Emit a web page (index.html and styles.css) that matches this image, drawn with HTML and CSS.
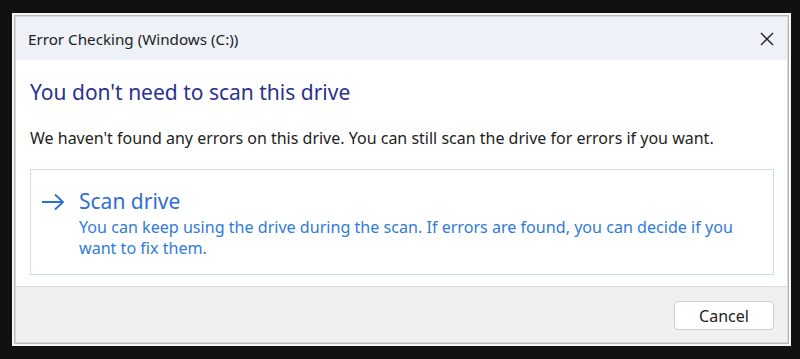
FILE: index.html
```html
<!DOCTYPE html>
<html>
<head>
    <meta charset="utf-8">
    <title>Error Checking (Windows (C:))</title>
    <link rel="stylesheet" href="styles.css">
</head>
<body>
<div class="frame">
    <div class="window">
        <div class="titlebar">
            <span class="title">Error Checking (Windows (C:))</span>
            <svg class="close" width="16" height="16" viewBox="0 0 16 16">
                <path d="M2 2 L14 14 M14 2 L2 14" stroke="#222" stroke-width="1.4" fill="none"/>
            </svg>
        </div>
        <div class="content">
            <h1>You don't need to scan this drive</h1>
            <p class="info">We haven't found any errors on this drive. You can still scan the drive for errors if you want.</p>
            <div class="option">
                <svg class="arrow" width="24" height="18" viewBox="0 0 24 18">
                    <path d="M1 9 H22 M14 1.5 L22 9 L14 16.5" stroke="#2b6fd6" stroke-width="1.8" fill="none"/>
                </svg>
                <div class="option-text">
                    <div class="option-title">Scan drive</div>
                    <div class="option-desc">You can keep using the drive during the scan. If errors are found, you can decide if you want to fix them.</div>
                </div>
            </div>
        </div>
        <div class="footer">
            <button>Cancel</button>
        </div>
    </div>
</div>
</body>
</html>
```

FILE: styles.css
```css
body {
    margin: 0;
    padding: 13px 9px 13px 12px;
    background-color: #111;
    font-family: "Noto Sans", "Open Sans", sans-serif;
}
.frame {
    border: 2px solid #f6f6f6;
    background-color: #b8b8b8;
    padding: 1px;
}
.window {
    border: 1px solid #d8d8d8;
    background-color: #fff;
    display: flex;
    flex-direction: column;
    height: 325px;
}
.titlebar {
    display: flex;
    align-items: center;
    justify-content: space-between;
    height: 43px;
    padding: 0 12px 0 12px;
    background-color: #eef2f8;
}
.title {
    font-size: 15.2px;
    color: #222;
}
.content {
    flex: 1;
    padding: 0 13px 0 14px;
}
h1 {
    margin: 18px 0 0 0;
    font-size: 21px;
    line-height: 28px;
    font-weight: normal;
    color: #2a338e;
}
.info {
    margin: 21px 0 0 0;
    font-size: 16px;
    line-height: 22px;
    color: #222;
}
.option {
    display: flex;
    margin-top: 20px;
    border: 1.5px solid #c8ddf2;
    padding: 18px 20px 0 10px;
    height: 86px;
}
.arrow {
    margin-top: 5px;
    margin-right: 14px;
}
.option-title {
    font-size: 21px;
    color: #2f6fd0;
    line-height: 26px;
}
.option-desc {
    width: 665px;
    margin-top: 3px;
    font-size: 16.1px;
    color: #2f7bd8;
    line-height: 21px;
}
.footer {
    display: flex;
    justify-content: flex-end;
    height: 56px;
    padding: 14px 13px 0 0;
    box-sizing: border-box;
    border-top: 1px solid #dcdcdc;
    background-color: #f0f0f0;
}
button {
    width: 100px;
    height: 29px;
    background-color: #fff;
    border: 1px solid #cfcfcf;
    border-radius: 4px;
    font-family: "Noto Sans", "Open Sans", sans-serif;
    font-size: 16px;
    color: #222;
}
```
